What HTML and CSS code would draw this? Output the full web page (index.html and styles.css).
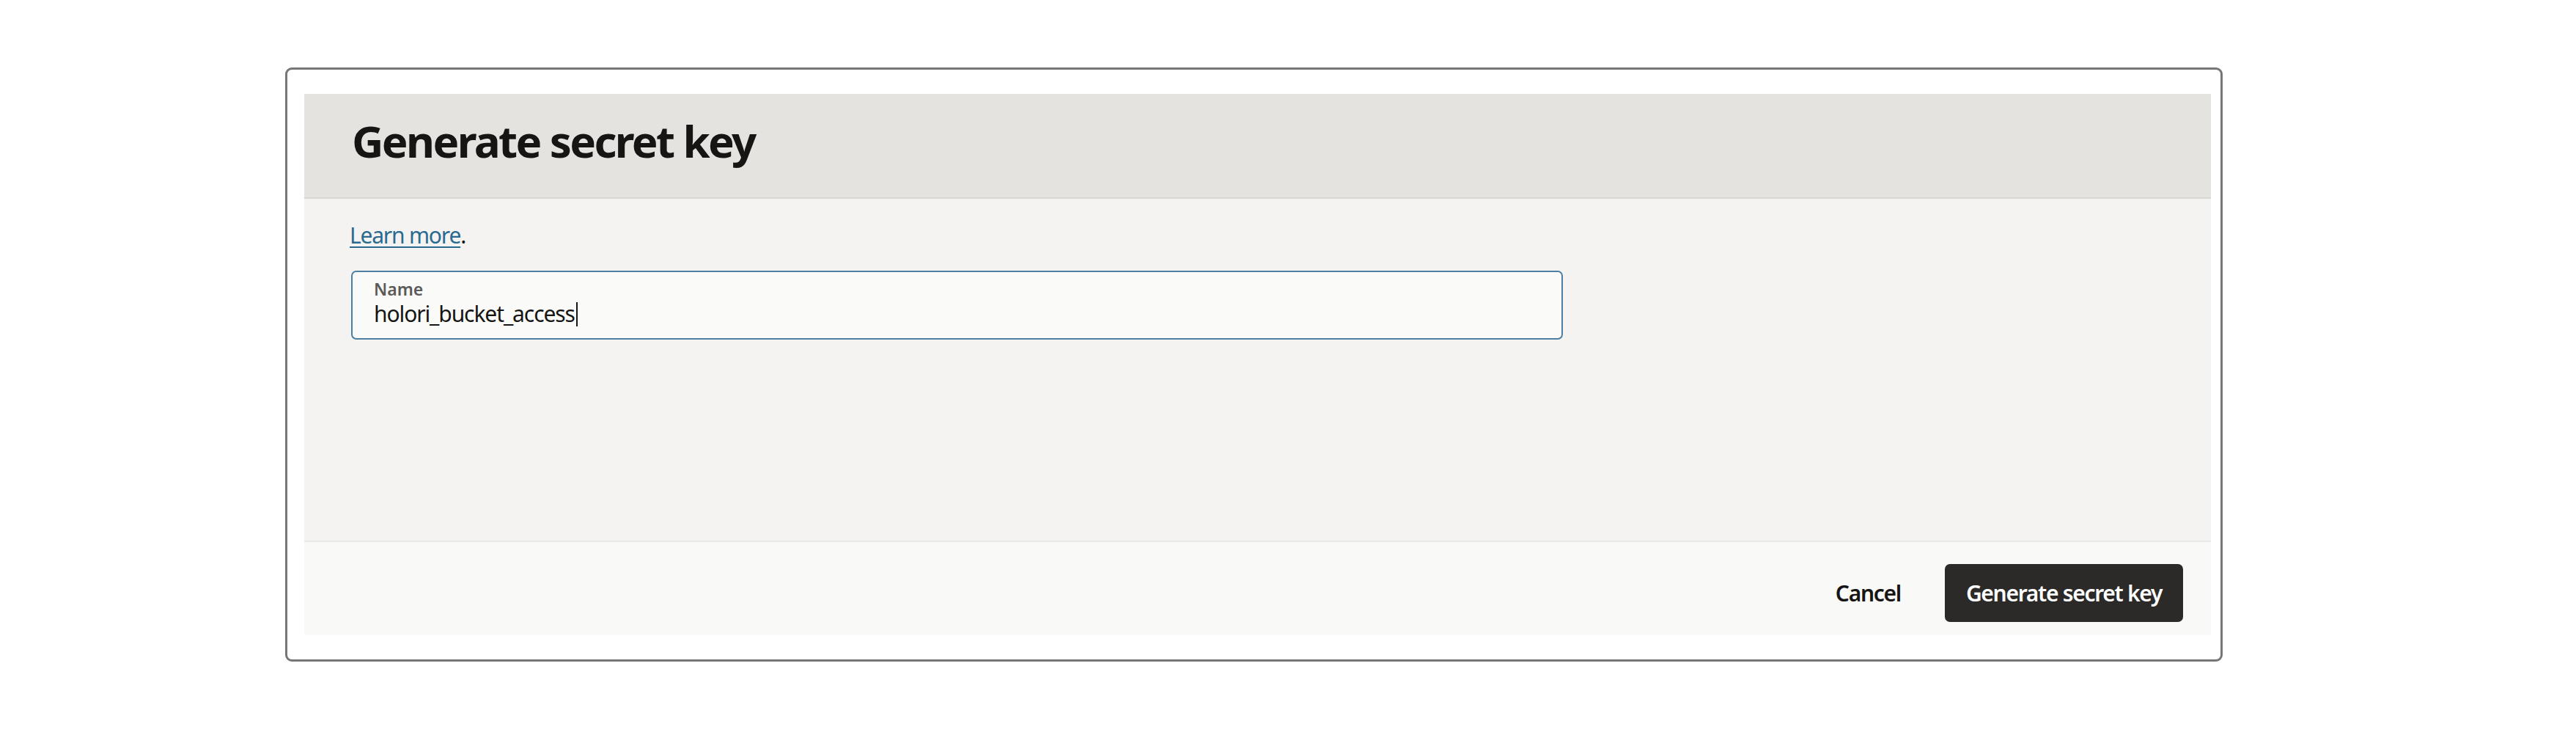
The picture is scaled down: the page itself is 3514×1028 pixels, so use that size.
FILE: index.html
```html
<!DOCTYPE html>
<html lang="en">
<head>
<meta charset="utf-8">
<title>Generate secret key</title>
<link rel="stylesheet" href="styles.css">
</head>
<body>
<div class="frame">
  <div class="dialog">
    <div class="dialog-header">
      <h1 class="dialog-title">Generate secret key</h1>
    </div>
    <div class="dialog-body">
      <p class="help"><a class="link" href="#">Learn more</a>.</p>
      <div class="field">
        <label class="field-label">Name</label>
        <div class="field-value">holori_bucket_access<span class="caret"></span></div>
      </div>
    </div>
    <div class="dialog-footer">
      <button class="btn btn-ghost">Cancel</button>
      <button class="btn btn-primary">Generate secret key</button>
    </div>
  </div>
</div>
</body>
</html>
```
FILE: styles.css
```css
* { box-sizing: border-box; }
html, body { margin: 0; padding: 0; background: #ffffff; }
body {
  font-family: "Noto Sans", "Open Sans", sans-serif;
  color: #161513;
  padding: 92px 0 0 389px;
}
.frame {
  width: 2643px;
  height: 810px;
  border: 3px solid #767676;
  border-radius: 9px;
  padding: 33px 13px 32px 23px;
}
.dialog {
  width: 2601px;
  height: 738px;
  display: flex;
  flex-direction: column;
}
.dialog-header {
  height: 143px;
  background: #e4e3e0;
  border-bottom: 2px solid #d9d7d3;
  display: flex;
  align-items: center;
  padding: 0 0 14px 65px;
}
.dialog-title {
  margin: 0;
  font-size: 60px;
  font-weight: 700;
  letter-spacing: -2.6px;
  line-height: 1;
  color: #161513;
}
.dialog-body {
  flex: 1;
  background: #f4f3f1;
  padding: 30px 0 0 64px;
}
.help {
  margin: 0;
  font-size: 30px;
  line-height: 40px;
  letter-spacing: -1.2px;
  text-indent: -2px;
  color: #161513;
}
.link {
  color: #2a6a8f;
  text-decoration: underline;
  text-decoration-thickness: 2px;
  text-underline-offset: 4px;
}
.field {
  margin-top: 28px;
  width: 1653px;
  height: 94px;
  border: 2px solid #4f7ea3;
  border-radius: 7px;
  background: #fafaf9;
  padding: 10px 0 0 29px;
}
.field-label {
  display: block;
  font-size: 23px;
  line-height: 26px;
  font-weight: 600;
  color: #5b5a58;
}
.field-value {
  margin-top: 3px;
  font-size: 30px;
  line-height: 36px;
  letter-spacing: -1.1px;
  color: #161513;
  display: flex;
  align-items: center;
}
.caret {
  display: inline-block;
  width: 0;
  height: 33px;
  border-left: 2px solid #161513;
  margin-left: 2px;
}
.dialog-footer {
  height: 129px;
  background: #f9f9f8;
  border-top: 2px solid #e8e7e5;
  display: flex;
  align-items: center;
  justify-content: flex-end;
  padding: 12px 38px 0 0;
  gap: 30px;
}
.btn {
  font-family: inherit;
  font-size: 30px;
  font-weight: 600;
  letter-spacing: -1.3px;
  border: none;
  border-radius: 7px;
  height: 79px;
  cursor: pointer;
}
.btn-ghost {
  background: transparent;
  color: #161513;
  padding: 0 30px;
}
.btn-primary {
  background: #2b2a28;
  color: #ffffff;
  width: 325px;
  padding: 0;
}
```
